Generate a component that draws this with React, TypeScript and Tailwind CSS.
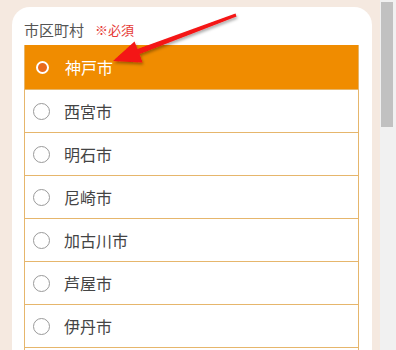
import React from "react";

const cities = ["神戸市", "西宮市", "明石市", "尼崎市", "加古川市", "芦屋市", "伊丹市", ""];

const font = { fontFamily: '"Noto Sans CJK JP", "Noto Sans", sans-serif' };

export default function App() {
  const selected = "神戸市";

  return (
    <div className="relative flex h-[350px] w-[396px] overflow-hidden bg-[#f5e9e0]" style={font}>
      {/* page column */}
      <div className="flex-1 pl-[12px] pr-[8px] pt-[7px]">
        <div className="h-full rounded-t-[18px] bg-white pl-[12px] pr-[13px] pt-[13px]">
          <div className="mb-[5px] flex h-5 items-center gap-[11px] leading-5">
            <span className="text-[15px] text-[#555]">市区町村</span>
            <span className="text-[13px] text-[#e53935]">※必須</span>
          </div>

          <div className="border-x border-[#e6b66c]">
            {cities.map((city, i) => {
              const active = city === selected;
              return (
                <div
                  key={i}
                  className={
                    active
                      ? "flex h-[44px] items-center bg-[#f08c00] pl-[9px]"
                      : "flex h-[43px] items-center border-t border-[#e6b66c] bg-white pl-[8px]"
                  }
                >
                  {active ? (
                    <span className="flex h-[17px] w-[17px] items-center justify-center">
                      <span className="h-[13px] w-[13px] rounded-full border-[2.5px] border-white bg-[#e96a1c]" />
                    </span>
                  ) : (
                    <span className="h-[17px] w-[17px] rounded-full border-[1.5px] border-[#9a9a9a] bg-white" />
                  )}
                  {city && (
                    <span
                      className={
                        active
                          ? "ml-[14px] text-[16px] text-white"
                          : "ml-[14px] text-[16px] text-[#444]"
                      }
                    >
                      {city}
                    </span>
                  )}
                </div>
              );
            })}
          </div>
        </div>
      </div>

      {/* scrollbar */}
      <div className="w-[16px] bg-[#f1f1f1] pl-[1px] pr-[3px] pt-[2px]">
        <div className="h-[125px] w-[12px] bg-[#c1c1c1]" />
      </div>

      {/* annotation arrow */}
      <svg
        className="pointer-events-none absolute left-0 top-0"
        width="396"
        height="350"
        viewBox="0 0 396 350"
      >
        <defs>
          <filter id="sh" x="-20%" y="-20%" width="140%" height="140%">
            <feDropShadow dx="1" dy="2" stdDeviation="1.5" floodColor="#000" floodOpacity="0.35" />
          </filter>
        </defs>
        <polygon
          filter="url(#sh)"
          fill="#f41414"
          points="113,61 142.5,62.5 139.5,54 236.5,16.4 235.5,13.6 137.5,49 134.5,41.5"
        />
      </svg>
    </div>
  );
}
